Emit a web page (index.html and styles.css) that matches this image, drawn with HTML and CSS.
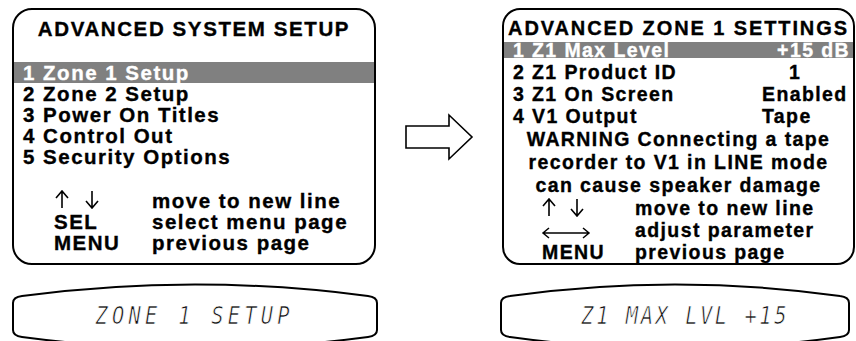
FILE: index.html
```html
<!DOCTYPE html>
<html lang="en">
<head>
  <meta charset="UTF-8">
  <title>Advanced Setup Menus</title>
  <link rel="stylesheet" href="styles.css">
</head>
<body>
  <div class="screens">
    <div class="osd osd-system">
      <div class="osd-title">ADVANCED SYSTEM SETUP</div>
      <ul class="menu">
        <li class="menu-item is-selected">1 Zone 1 Setup</li>
        <li class="menu-item">2 Zone 2 Setup</li>
        <li class="menu-item">3 Power On Titles</li>
        <li class="menu-item">4 Control Out</li>
        <li class="menu-item">5 Security Options</li>
      </ul>
      <div class="hints">
        <svg class="key-icon" width="46" height="21" viewBox="0 0 46 21">
          <path d="M8 1 V18 M2 8 L8 1 L14 8 M38 1 V18 M32 11 L38 18 L44 11" fill="none" stroke="#000" stroke-width="1.6"/>
        </svg>
        <span>move to new line</span>
        <span>SEL</span><span>select menu page</span>
        <span>MENU</span><span>previous page</span>
      </div>
    </div>

    <svg class="next-arrow" width="70" height="48" viewBox="0 0 70 48">
      <path d="M1 13 H44 V2 L67 24 L44 46 V35 H1 Z" fill="#fff" stroke="#000" stroke-width="1.6"/>
    </svg>

    <div class="osd osd-zone">
      <div class="osd-title">ADVANCED ZONE 1 SETTINGS</div>
      <div class="setting is-selected"><span>1 Z1 Max Level</span><span class="value-right">+15 dB</span></div>
      <div class="setting"><span>2 Z1 Product ID</span><span class="value-id">1</span></div>
      <div class="setting"><span>3 Z1 On Screen</span><span>Enabled</span></div>
      <div class="setting"><span>4 V1 Output</span><span>Tape</span></div>
      <p class="warning">WARNING Connecting a tape<br>recorder to V1 in LINE mode<br>can cause speaker damage</p>
      <div class="hints">
        <svg class="key-icon" width="42" height="22" viewBox="0 0 42 22">
          <path d="M7 2 V19 M1 9 L7 2 L13 9 M35 2 V19 M29 12 L35 19 L41 12" fill="none" stroke="#000" stroke-width="1.6"/>
        </svg>
        <span>move to new line</span>
        <svg class="key-icon" width="48" height="22" viewBox="0 0 48 22">
          <path d="M1 14 H47 M7 9 L1 14 L7 19 M41 9 L47 14 L41 19" fill="none" stroke="#000" stroke-width="1.5"/>
        </svg>
        <span>adjust parameter</span>
        <span>MENU</span><span>previous page</span>
      </div>
    </div>
  </div>

  <div class="displays">
    <div class="lcd lcd-system">
      <svg class="lcd-frame" width="368" height="60" viewBox="0 0 368 60">
        <path d="M2 22 Q2 16 11 15 Q184 -8 357 15 Q366 16 366 22 V49 Q366 55 357 56 Q184 79 11 56 Q2 55 2 49 Z" fill="none" stroke="#000" stroke-width="2"/>
      </svg>
      <div class="lcd-text"><span>ZONE 1 SETUP</span></div>
    </div>
    <div class="lcd lcd-zone">
      <svg class="lcd-frame" width="352" height="60" viewBox="0 0 352 60">
        <path d="M2 22 Q2 16 11 15 Q176 -8 341 15 Q350 16 350 22 V49 Q350 55 341 56 Q176 79 11 56 Q2 55 2 49 Z" fill="none" stroke="#000" stroke-width="2"/>
      </svg>
      <div class="lcd-text lcd-text-zone"><span>Z1 MAX LVL +15</span></div>
    </div>
  </div>
</body>
</html>
```

FILE: styles.css
```css
body {
  margin: 0;
  font-family: "Liberation Sans", Arial, sans-serif;
  font-weight: bold;
  color: #000;
  background-color: #fff;
  overflow: hidden;
}

.screens {
  display: flex;
  align-items: center;
  padding-top: 8px;
}

/* on-screen menu boxes */
.osd {
  box-sizing: border-box;
  border: 2px solid #000;
  -webkit-text-stroke-width: 0.35px; /* heavier, like the printed manual */
}

.osd-system {
  width: 364px;
  margin-left: 12px;
  border-radius: 20px;
  padding: 8px 0 10px;
  font-size: 20.5px;
  line-height: 21px;
  letter-spacing: 1.5px;
}

.osd-zone {
  width: 353px;
  border-radius: 18px;
  padding: 7px 0 0;
  font-size: 19.5px;
  line-height: 22px;
  letter-spacing: 1.4px;
}

.osd-title {
  text-align: center;
}

.osd-system .osd-title {
  letter-spacing: 1.6px;
  margin-bottom: 23px;
}

.osd-zone .osd-title {
  font-size: 20px;
  letter-spacing: 1.9px;
}

.menu {
  list-style: none;
  margin: 0 0 23px;
  padding: 0;
}

.menu-item {
  padding-left: 9px;
}

.is-selected {
  background-color: #808080;
  color: #fff;
}

.setting {
  display: grid;
  grid-template-columns: 249px 1fr;
  padding: 0 3px 0 9px;
}

.setting.is-selected {
  line-height: 16px;
  margin: 3px 0;
}

.value-right {
  text-align: right;
}

.value-id {
  padding-left: 27px;
}

.warning {
  margin: 1px 0 0;
  line-height: 23px;
  text-align: center;
}

.hints {
  display: grid;
}

.osd-system .hints {
  grid-template-columns: 98px auto;
  padding-left: 40px;
}

.osd-zone .hints {
  grid-template-columns: 93px auto;
  padding-left: 38px;
}

.key-icon {
  display: block;
  overflow: visible;
}

.next-arrow {
  display: block;
  margin: 0 27px 0 29px;
}

/* front panel displays */
.displays {
  display: flex;
  margin-top: 16px;
}

.lcd {
  position: relative;
  height: 60px;
}

.lcd-frame {
  position: absolute;
  top: 0;
  left: 0;
}

.lcd-system {
  width: 368px;
  margin-left: 11px;
}

.lcd-zone {
  width: 352px;
  margin-left: 120px;
}

.lcd-text {
  padding-top: 23px;
  font-family: "DejaVu Sans Mono", monospace;
  font-weight: normal;
  font-style: oblique;
  font-size: 24px;
  line-height: 24px;
  text-align: center;
  color: #111;
}

.lcd-text span {
  display: inline-block;
  letter-spacing: 5px;
  transform: scaleX(0.85);
  -webkit-text-stroke: 0.7px #fff;
}

.lcd-text-zone {
  padding-left: 20px;
}

.lcd-text-zone span {
  letter-spacing: 3px;
}
```
